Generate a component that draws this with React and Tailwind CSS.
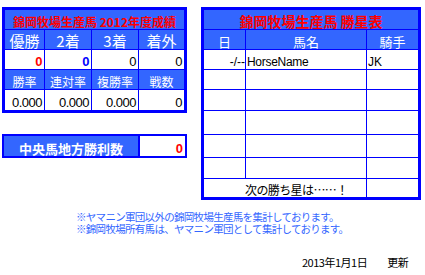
import React from 'react';

const jp = "font-['Noto_Sans_CJK_JP',sans-serif]";
const num = "font-['Liberation_Sans',sans-serif]";

const HeadCell = ({ children, size = 'text-[15px]' }) => (
  <div className={`bg-[#3366ff] text-white ${size} leading-none flex items-end justify-center pb-px ${jp}`}>
    {children}
  </div>
);

const ValueCell = ({ children, color = 'text-black', bold = false }) => (
  <div className={`bg-white ${color} ${bold ? 'font-bold' : ''} text-[13px] leading-none flex items-end justify-end pr-[2px] pb-px ${num} tracking-[-0.5px]`}>
    {children}
  </div>
);

const Cell = ({ children, className = '' }) => (
  <div className={`bg-white text-[12px] leading-none flex items-end pb-px ${className}`}>{children}</div>
);

const ResultsTable = () => (
  <div className="border-[3px] border-[#0000ff] bg-[#0000ff] grid gap-px grid-cols-[39px_46px_46px_45px] grid-rows-[19px_19px_19px_19px_20px]">
    <div className={`col-span-4 bg-[#3366ff] text-[#ff0000] font-bold text-[12px] leading-none flex items-end justify-center pb-px ${jp}`}>
      錦岡牧場生産馬 2012年度成績
    </div>
    <HeadCell>優勝</HeadCell>
    <HeadCell>2着</HeadCell>
    <HeadCell>3着</HeadCell>
    <HeadCell>着外</HeadCell>
    <ValueCell color="text-[#ff0000]" bold>0</ValueCell>
    <ValueCell color="text-[#0000ff]" bold>0</ValueCell>
    <ValueCell>0</ValueCell>
    <ValueCell>0</ValueCell>
    <HeadCell size="text-[12px]">勝率</HeadCell>
    <HeadCell size="text-[12px]">連対率</HeadCell>
    <HeadCell size="text-[12px]">複勝率</HeadCell>
    <HeadCell size="text-[12px]">戦数</HeadCell>
    <ValueCell>0.000</ValueCell>
    <ValueCell>0.000</ValueCell>
    <ValueCell>0.000</ValueCell>
    <ValueCell>0</ValueCell>
  </div>
);

const WinsBox = () => (
  <div className="mt-[21px] h-[24px] border-2 border-[#0000ff] flex">
    <div className={`w-[134px] bg-[#3366ff] text-white font-bold text-[13px] leading-none flex items-end justify-center pb-px ${jp}`}>
      中央馬地方勝利数
    </div>
    <div className={`flex-1 border-l-2 border-[#0000ff] bg-white text-[#ff0000] font-bold text-[13px] leading-none flex items-end justify-end pr-[2px] pb-px ${num}`}>
      0
    </div>
  </div>
);

const emptyRows = [1, 2, 3, 4, 5];

const StarTable = () => (
  <div className="w-[220px] border-[3px] border-[#0000ff] bg-[#0000ff] grid gap-px grid-cols-[41px_120px_51px] grid-rows-[19px_19px_19px_19px_20px_23px_22px_20px_18px]">
    <div className={`col-span-3 bg-[#3366ff] text-[#ff0000] font-bold text-[14px] leading-none flex items-end justify-center pb-px ${jp}`}>
      錦岡牧場生産馬 勝星表
    </div>
    <HeadCell size="text-[13px]">日</HeadCell>
    <HeadCell size="text-[13px]">馬名</HeadCell>
    <HeadCell size="text-[13px]">騎手</HeadCell>
    <Cell className={`justify-end ${num}`}>-/--</Cell>
    <Cell className={`pl-px ${num} tracking-[-0.3px]`}>HorseName</Cell>
    <Cell className={`pl-px ${num}`}>JK</Cell>
    {emptyRows.map((r) => (
      <React.Fragment key={r}>
        <Cell />
        <Cell />
        <Cell />
      </React.Fragment>
    ))}
    <Cell />
    <Cell className={`${jp} tracking-[-0.6px] -ml-px`}>次の勝ち星は……！</Cell>
    <Cell />
  </div>
);

export default function App() {
  return (
    <div className={`w-[425px] h-[275px] bg-white overflow-hidden ${jp}`}>
      <div className="flex items-start pl-[2px] pt-[7px] gap-[14px]">
        <div className="w-[185px] flex flex-col">
          <ResultsTable />
          <WinsBox />
        </div>
        <StarTable />
      </div>
      <div className="mt-[11px] pl-[76px] text-[#3366ff] text-[10.5px] leading-[12px] tracking-[-0.7px]">
        <div>※ヤマニン軍団以外の錦岡牧場生産馬を集計しております。</div>
        <div>※錦岡牧場所有馬は、ヤマニン軍団として集計しております。</div>
      </div>
      <div className="mt-[21px] pl-[302px] flex gap-[20px] text-[11px] leading-[12px] text-black tracking-[-0.5px]">
        <span>2013年1月1日</span>
        <span>更新</span>
      </div>
    </div>
  );
}
